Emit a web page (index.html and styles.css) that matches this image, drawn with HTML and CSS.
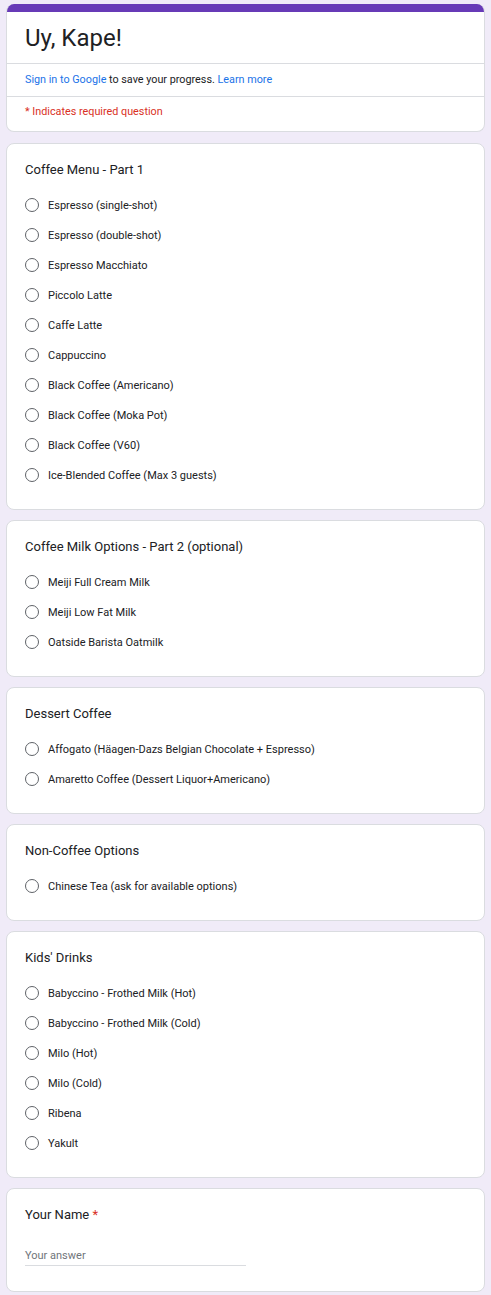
FILE: index.html
```html
<!DOCTYPE html>
<html>
<head>
<meta charset="utf-8">
<link rel="stylesheet" href="styles.css">
</head>
<body>
<div class="page">
  <div class="card header">
    <div class="bar"></div>
    <div class="head-title"><h1>Uy, Kape!</h1></div>
    <div class="head-row signin"><a>Sign in to Google</a> to save your progress. <a>Learn more</a></div>
    <div class="head-row required">* Indicates required question</div>
  </div>

  <div class="card q">
    <div class="q-title">Coffee Menu - Part 1</div>
    <div class="opts">
      <div class="opt"><span class="radio"></span>Espresso (single-shot)</div>
      <div class="opt"><span class="radio"></span>Espresso (double-shot)</div>
      <div class="opt"><span class="radio"></span>Espresso Macchiato</div>
      <div class="opt"><span class="radio"></span>Piccolo Latte</div>
      <div class="opt"><span class="radio"></span>Caffe Latte</div>
      <div class="opt"><span class="radio"></span>Cappuccino</div>
      <div class="opt"><span class="radio"></span>Black Coffee (Americano)</div>
      <div class="opt"><span class="radio"></span>Black Coffee (Moka Pot)</div>
      <div class="opt"><span class="radio"></span>Black Coffee (V60)</div>
      <div class="opt"><span class="radio"></span>Ice-Blended Coffee (Max 3 guests)</div>
    </div>
  </div>

  <div class="card q">
    <div class="q-title">Coffee Milk Options - Part 2 (optional)</div>
    <div class="opts">
      <div class="opt"><span class="radio"></span>Meiji Full Cream Milk</div>
      <div class="opt"><span class="radio"></span>Meiji Low Fat Milk</div>
      <div class="opt"><span class="radio"></span>Oatside Barista Oatmilk</div>
    </div>
  </div>

  <div class="card q">
    <div class="q-title">Dessert Coffee</div>
    <div class="opts">
      <div class="opt"><span class="radio"></span>Affogato (Häagen-Dazs Belgian Chocolate + Espresso)</div>
      <div class="opt"><span class="radio"></span>Amaretto Coffee (Dessert Liquor+Americano)</div>
    </div>
  </div>

  <div class="card q">
    <div class="q-title">Non-Coffee Options</div>
    <div class="opts">
      <div class="opt"><span class="radio"></span>Chinese Tea (ask for available options)</div>
    </div>
  </div>

  <div class="card q">
    <div class="q-title">Kids' Drinks</div>
    <div class="opts">
      <div class="opt"><span class="radio"></span>Babyccino - Frothed Milk (Hot)</div>
      <div class="opt"><span class="radio"></span>Babyccino - Frothed Milk (Cold)</div>
      <div class="opt"><span class="radio"></span>Milo (Hot)</div>
      <div class="opt"><span class="radio"></span>Milo (Cold)</div>
      <div class="opt"><span class="radio"></span>Ribena</div>
      <div class="opt"><span class="radio"></span>Yakult</div>
    </div>
  </div>

  <div class="card q">
    <div class="q-title">Your Name <span class="star">*</span></div>
    <div class="answer">Your answer</div>
  </div>
</div>
</body>
</html>
```

FILE: styles.css
```css
html, body {
  margin: 0;
  padding: 0;
  background: #f0ebf8;
}
body {
  font-family: Roboto, "Noto Sans", Arial, sans-serif;
  color: #202124;
}
.page {
  display: flex;
  flex-direction: column;
  gap: 10.5px;
  padding: 4px 6px 5px;
}
.card {
  background: #fff;
  border: 1px solid #dadce0;
  border-radius: 8px;
  overflow: hidden;
}
.header {
  border-top: none;
}
.bar {
  height: 8px;
  background: #673ab7;
}
.head-title {
  padding: 11px 18px 10px;
  border-bottom: 1px solid #dadce0;
}
.head-title h1 {
  margin: 0;
  font-size: 24px;
  font-weight: 400;
  line-height: 30px;
}
.head-row {
  font-size: 10.8px;
  line-height: 16px;
  padding: 8px 18px;
}
.signin {
  border-bottom: 1px solid #dadce0;
  color: #202124;
}
.signin a {
  color: #1a73e8;
}
.required {
  color: #d93025;
  padding: 7px 18px 11px;
}
.header + .q {
  margin-top: 0.5px;
}
.q {
  padding: 18px 18px 18.5px;
}
.q-title {
  font-size: 13px;
  line-height: 16px;
}
.star {
  color: #d93025;
}
.opts {
  margin-top: 12px;
  display: flex;
  flex-direction: column;
}
.opt {
  display: flex;
  align-items: center;
  height: 30px;
  font-size: 11px;
  gap: 9px;
}
.radio {
  width: 12px;
  height: 12px;
  border: 1.5px solid #5f6368;
  border-radius: 50%;
  flex: none;
}
.answer {
  margin-top: 25px;
  width: 221px;
  font-size: 11px;
  line-height: 16px;
  padding-bottom: 1px;
  color: #70757a;
  border-bottom: 1px solid #dadce0;
  margin-bottom: 6px;
}
```
